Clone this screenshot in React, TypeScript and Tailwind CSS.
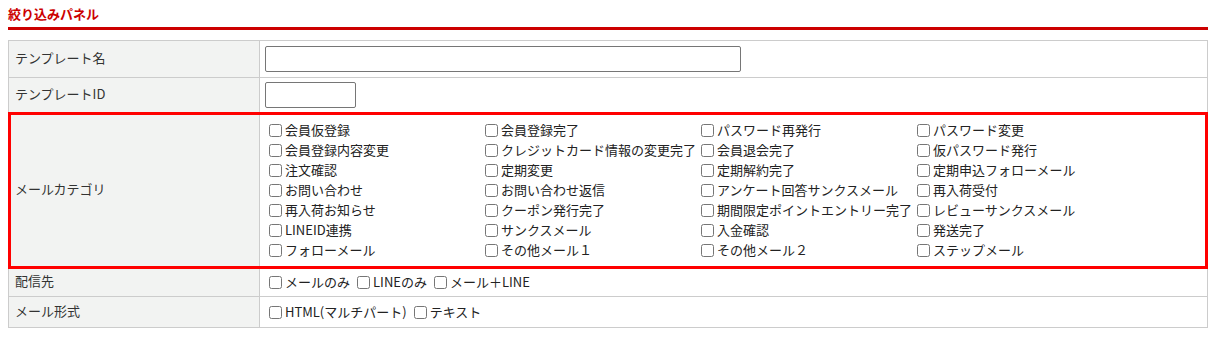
import React from "react";

const categories: string[][] = [
  ["会員仮登録", "会員登録完了", "パスワード再発行", "パスワード変更"],
  ["会員登録内容変更", "クレジットカード情報の変更完了", "会員退会完了", "仮パスワード発行"],
  ["注文確認", "定期変更", "定期解約完了", "定期申込フォローメール"],
  ["お問い合わせ", "お問い合わせ返信", "アンケート回答サンクスメール", "再入荷受付"],
  ["再入荷お知らせ", "クーポン発行完了", "期間限定ポイントエントリー完了", "レビューサンクスメール"],
  ["LINEID連携", "サンクスメール", "入金確認", "発送完了"],
  ["フォローメール", "その他メール１", "その他メール２", "ステップメール"],
];

function Check({ label }: { label: string }) {
  return (
    <label className="flex items-center h-[20px] whitespace-nowrap">
      <input type="checkbox" className="m-0 ml-[4px] mr-[3px] w-[13px] h-[13px]" />
      <span>{label}</span>
    </label>
  );
}

function Row({
  label,
  className = "",
  children,
}: {
  label: string;
  className?: string;
  children: React.ReactNode;
}) {
  return (
    <div className={`flex border-b border-[#ccc] ${className}`}>
      <div className="w-[251px] shrink-0 bg-[#f2f3f2] border-r border-[#ccc] flex items-center pl-[6px] pb-[3px]">
        {label}
      </div>
      <div className="flex-1 flex items-center pl-[5px]">{children}</div>
    </div>
  );
}

export default function App() {
  return (
    <div className="pl-2 pt-[5px] w-[1208px] bg-white text-[13px] text-[#333] font-['Noto_Sans_CJK_JP',sans-serif] leading-[18px]">
      {/* 見出し */}
      <div className="font-bold text-[#cc0000] pb-[4px] border-b-[3px] border-[#cc0000]">
        絞り込みパネル
      </div>

      <div className="mt-[10px] border-t border-l border-r border-[#ccc]">
        <Row label="テンプレート名" className="h-[37px]">
          <input type="text" className="w-[476px] h-[26px] border border-[#767676] rounded-[2px] bg-white" />
        </Row>
        <Row label="テンプレートID" className="h-[35px]">
          <input type="text" className="w-[91px] h-[26px] border border-[#767676] rounded-[2px] bg-white" />
        </Row>
        <Row
          label="メールカテゴリ"
          className="h-[155px] relative z-10 outline-3 outline-[#ff0000] -outline-offset-2"
        >
          <div className="grid grid-cols-[repeat(4,216px)] text-[#222]">
            {categories.flat().map((c) => (
              <Check key={c} label={c} />
            ))}
          </div>
        </Row>
        <Row label="配信先" className="h-[29px]">
          <div className="flex items-center gap-[3px] text-[#222]">
            <Check label="メールのみ" />
            <Check label="LINEのみ" />
            <Check label="メール＋LINE" />
          </div>
        </Row>
        <Row label="メール形式" className="h-[31px]">
          <div className="flex items-center gap-[3px] text-[#222]">
            <Check label="HTML(マルチパート)" />
            <Check label="テキスト" />
          </div>
        </Row>
      </div>
    </div>
  );
}
